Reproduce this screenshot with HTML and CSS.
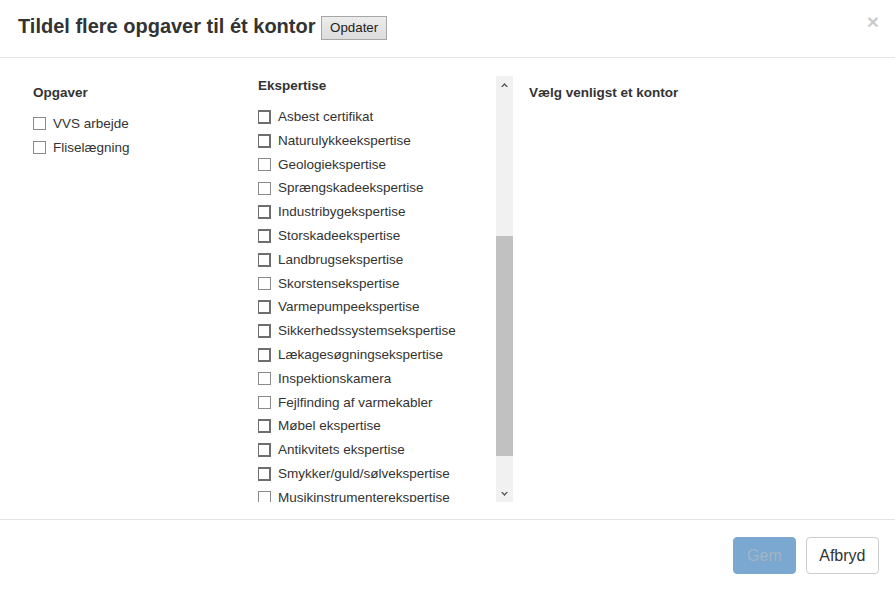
FILE: index.html
```html
<!DOCTYPE html>
<html lang="da">
<head>
<meta charset="utf-8">
<title>Tildel flere opgaver til ét kontor</title>
<link rel="stylesheet" href="styles.css">
</head>
<body>
<div class="modal">
  <div class="modal-header">
    <h4 class="modal-title">Tildel flere opgaver til ét kontor <button class="btn-update" type="button">Opdater</button></h4>
    <button class="close" type="button">×</button>
  </div>
  <div class="modal-body">
    <div class="col col-tasks">
      <div class="col-heading">Opgaver</div>
      <ul class="checklist">
        <li class="item"><span class="cb"></span><span class="lbl">VVS arbejde</span></li>
        <li class="item"><span class="cb"></span><span class="lbl">Fliselægning</span></li>
      </ul>
    </div>
    <div class="col col-expertise">
      <div class="scrollbox">
        <div class="scroll-content">
          <div class="col-heading">Ekspertise</div>
          <ul class="checklist">
            <li class="item"><span class="cb dark"></span><span class="lbl">Asbest certifikat</span></li>
            <li class="item"><span class="cb dark"></span><span class="lbl">Naturulykkeekspertise</span></li>
            <li class="item"><span class="cb"></span><span class="lbl">Geologiekspertise</span></li>
            <li class="item"><span class="cb"></span><span class="lbl">Sprængskadeekspertise</span></li>
            <li class="item"><span class="cb dark"></span><span class="lbl">Industribygekspertise</span></li>
            <li class="item"><span class="cb dark"></span><span class="lbl">Storskadeekspertise</span></li>
            <li class="item"><span class="cb dark"></span><span class="lbl">Landbrugsekspertise</span></li>
            <li class="item"><span class="cb"></span><span class="lbl">Skorstensekspertise</span></li>
            <li class="item"><span class="cb dark"></span><span class="lbl">Varmepumpeekspertise</span></li>
            <li class="item"><span class="cb dark"></span><span class="lbl">Sikkerhedssystemsekspertise</span></li>
            <li class="item"><span class="cb dark"></span><span class="lbl">Lækagesøgningsekspertise</span></li>
            <li class="item"><span class="cb"></span><span class="lbl">Inspektionskamera</span></li>
            <li class="item"><span class="cb"></span><span class="lbl">Fejlfinding af varmekabler</span></li>
            <li class="item"><span class="cb dark"></span><span class="lbl">Møbel ekspertise</span></li>
            <li class="item"><span class="cb dark"></span><span class="lbl">Antikvitets ekspertise</span></li>
            <li class="item"><span class="cb dark"></span><span class="lbl">Smykker/guld/sølvekspertise</span></li>
            <li class="item"><span class="cb"></span><span class="lbl">Musikinstrumenterekspertise</span></li>
          </ul>
        </div>
        <div class="scrollbar">
          <div class="sb-arrow">
            <svg width="7" height="4" viewBox="0 0 7 4"><polygon points="3.5,0 7,4 5.4,4 3.5,1.9 1.6,4 0,4" fill="#505050"/></svg>
          </div>
          <div class="sb-track"><div class="sb-thumb"></div></div>
          <div class="sb-arrow">
            <svg width="7" height="4" viewBox="0 0 7 4"><polygon points="3.5,4 7,0 5.4,0 3.5,2.1 1.6,0 0,0" fill="#505050"/></svg>
          </div>
        </div>
      </div>
    </div>
    <div class="col col-office">
      <div class="col-heading">Vælg venligst et kontor</div>
    </div>
  </div>
  <div class="modal-footer">
    <button class="btn btn-primary" type="button" disabled>Gem</button>
    <button class="btn btn-default" type="button">Afbryd</button>
  </div>
</div>
</body>
</html>
```

FILE: styles.css
```css
* { box-sizing: border-box; }

html, body {
  margin: 0;
  padding: 0;
  background: #fff;
}

body {
  font-family: "Liberation Sans", Arial, sans-serif;
  color: #333;
  width: 895px;
  height: 591px;
  overflow: hidden;
}

.modal {
  display: flex;
  flex-direction: column;
  height: 591px;
}

/* Header */
.modal-header {
  display: flex;
  align-items: flex-start;
  height: 58px;
  padding: 14px 16px 0 18px;
  border-bottom: 1px solid #e5e5e5;
}

.modal-title {
  margin: 0;
  font-size: 20px;
  line-height: 24px;
  font-weight: bold;
  color: #333;
  white-space: nowrap;
}

.btn-update {
  font-family: "Liberation Sans", Arial, sans-serif;
  font-size: 13.33px;
  font-weight: normal;
  color: #222;
  height: 24px;
  padding: 1px 8px;
  margin-left: 0;
  background: linear-gradient(#ececec, #dcdcdc);
  border: 1px solid #a6a6a6;
  border-radius: 0;
  vertical-align: 1px;
}

.close {
  margin-left: auto;
  margin-top: -3px;
  padding: 0;
  border: 0;
  background: transparent;
  font-family: "Liberation Sans", Arial, sans-serif;
  font-size: 21px;
  font-weight: bold;
  line-height: 1;
  color: #000;
  opacity: 0.2;
}

/* Body */
.modal-body {
  display: flex;
  height: 461px;
  padding: 18px 0 17px 33px;
}

.col-tasks {
  width: 225px;
  padding-top: 8px;
}

.col-expertise {
  width: 255px;
}

.col-office {
  margin-left: 16px;
  padding-top: 8px;
}

.col-heading {
  font-size: 13.5px;
  font-weight: bold;
  line-height: 18px;
  height: 18px;
  margin-bottom: 10.1px;
  white-space: nowrap;
}

.checklist {
  list-style: none;
  margin: 0;
  padding: 0;
}

.item {
  display: flex;
  align-items: center;
  height: 23.8px;
  font-size: 13.5px;
  white-space: nowrap;
}

.cb {
  flex: none;
  width: 13px;
  height: 13px;
  margin-right: 7px;
  border: 1px solid #8a8a8a;
  background: #fff;
}

.cb.dark {
  width: 14px;
  height: 14px;
  margin-left: -1px;
  border: 2px solid #6e6e6e;
}

.lbl { line-height: 18px; }

/* Scroll box */
.scrollbox {
  display: flex;
  height: 426px;
}

.scroll-content {
  flex: 1;
  overflow: hidden;
  padding-top: 1px;
}

.scrollbar {
  flex: none;
  width: 17px;
  display: flex;
  flex-direction: column;
  background: #f1f1f1;
}

.sb-arrow {
  height: 17px;
  display: flex;
  align-items: center;
  justify-content: center;
}

.sb-track {
  flex: 1;
}

.sb-thumb {
  margin-top: 143px;
  height: 220px;
  background: #c1c1c1;
}

/* Footer */
.modal-footer {
  display: flex;
  justify-content: flex-end;
  gap: 10px;
  padding: 17px 16px 0 0;
  border-top: 1px solid #e5e5e5;
  height: 72px;
}

.btn {
  height: 37px;
  padding: 6px 13px;
  font-family: "Liberation Sans", Arial, sans-serif;
  font-size: 16px;
  line-height: 23px;
  border-radius: 4px;
  border: 1px solid transparent;
}

.btn-primary {
  background: #7aa8d0;
  border-color: #7aa8d0;
  color: #a3b4c4;
}

.btn-default {
  background: #fff;
  border-color: #ccc;
  color: #333;
  padding: 6px 12.5px;
}
```
